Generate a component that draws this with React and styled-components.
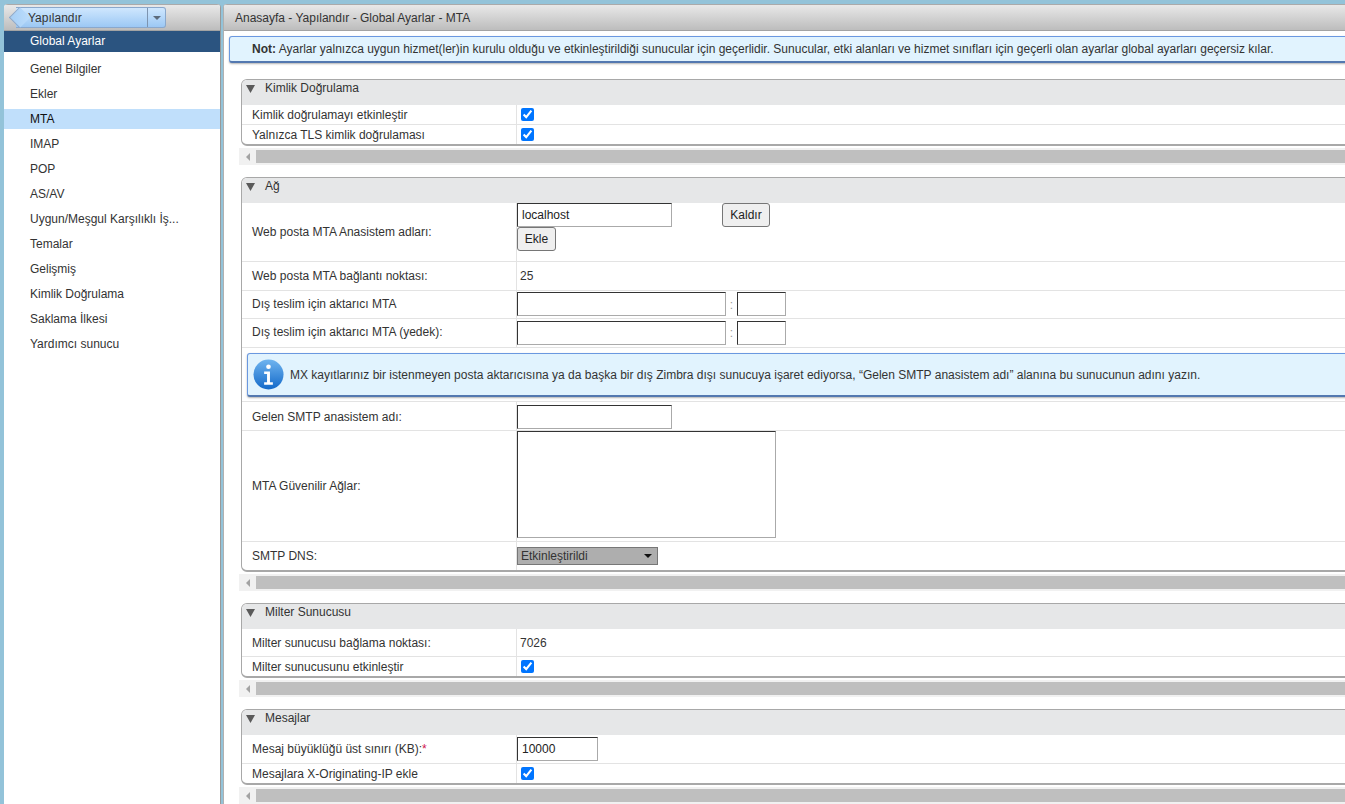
import styled, { createGlobalStyle } from 'styled-components';

const GlobalStyle = createGlobalStyle`
  html, body {
    margin: 0;
    height: 100%;
    overflow: hidden;
  }
  body {
    background: #93c3d9;
    font-family: "Liberation Sans", Arial, sans-serif;
    font-size: 12px;
    color: #333;
  }
`;

const menuItems = [
  'Genel Bilgiler',
  'Ekler',
  'MTA',
  'IMAP',
  'POP',
  'AS/AV',
  'Uygun/Meşgul Karşılıklı İş...',
  'Temalar',
  'Gelişmiş',
  'Kimlik Doğrulama',
  'Saklama İlkesi',
  'Yardımcı sunucu',
];

const TriangleDown = () => (
  <svg width="9" height="8" viewBox="0 0 9 8">
    <path d="M0 0h9L4.500 8z" fill="#5a5a5a" />
  </svg>
);

const Section = ({ title, mt, children }) => (
  <SectionWrap $mt={mt}>
    <Card>
      <CardHead>
        <TriangleDown />
        <span>{title}</span>
      </CardHead>
      {children}
    </Card>
    <ScrollBar>
      <ScrollArrow />
      <ScrollThumb />
    </ScrollBar>
  </SectionWrap>
);

// up / down: the label sits 1px off the row centre on some rows
const Field = ({ label, h, top, up, down, children }) => (
  <Row $h={h}>
    <Label $up={up} $down={down}>{label}</Label>
    <Value $top={top}>{children}</Value>
  </Row>
);

export default function App() {
  return (
    <Page>
      <GlobalStyle />
      <Sidebar>
        <PanelHead>
          <BackButton>
            <BackLabel>Yapılandır</BackLabel>
            <BackMenu />
          </BackButton>
        </PanelHead>
        <SelectedTitle>Global Ayarlar</SelectedTitle>
        <Menu>
          {menuItems.map((item) => (
            <MenuItem key={item} $active={item === 'MTA'}>{item}</MenuItem>
          ))}
        </Menu>
      </Sidebar>
      <Main>
        <PanelHead>
          <Crumbs>Anasayfa - Yapılandır - Global Ayarlar - MTA</Crumbs>
        </PanelHead>
        <Note>
          <b>Not:</b> Ayarlar yalnızca uygun hizmet(ler)in kurulu olduğu ve etkinleştirildiği sunucular için geçerlidir. Sunucular, etki alanları ve hizmet sınıfları için geçerli olan ayarlar global ayarları geçersiz kılar.
        </Note>

        <Section title="Kimlik Doğrulama" mt={16}>
          <Field label="Kimlik doğrulamayı etkinleştir" h={19}><Check type="checkbox" defaultChecked /></Field>
          <Field label="Yalnızca TLS kimlik doğrulaması" h={20}><Check type="checkbox" defaultChecked /></Field>
        </Section>

        <Section title="Ağ" mt={12}>
          <Field label="Web posta MTA Anasistem adları:" h={58} top>
            <HostLine>
              <TextInput $w={155} defaultValue="localhost" />
              <Button $w={48}>Kaldır</Button>
            </HostLine>
            <Button $w={39}>Ekle</Button>
          </Field>
          <Field label="Web posta MTA bağlantı noktası:" h={29}><Plain>25</Plain></Field>
          <Field label="Dış teslim için aktarıcı MTA" h={28} up>
            <TextInput $w={209} $mt={-1} />
            <Colon>:</Colon>
            <TextInput $w={49} $mt={-1} />
          </Field>
          <Field label="Dış teslim için aktarıcı MTA (yedek):" h={29} up>
            <TextInput $w={209} />
            <Colon>:</Colon>
            <TextInput $w={49} />
          </Field>
          <InfoWrap>
            <InfoBox>
              <svg width="31" height="31" viewBox="0 0 32 32">
                <defs>
                  <linearGradient id="infoFill" x1="0" y1="0" x2="0" y2="1">
                    <stop offset="0" stopColor="#6fb4ef" />
                    <stop offset="1" stopColor="#1369c9" />
                  </linearGradient>
                </defs>
                <circle cx="16" cy="16" r="15.5" fill="url(#infoFill)" />
                <circle cx="16" cy="8" r="2.4" fill="#fff" />
                <path d="M11.500 13h6v11h3v2.500h-9V24h3v-8.500h-3z" fill="#fff" />
              </svg>
              <span>MX kayıtlarınız bir istenmeyen posta aktarıcısına ya da başka bir dış Zimbra dışı sunucuya işaret ediyorsa, “Gelen SMTP anasistem adı” alanına bu sunucunun adını yazın.</span>
            </InfoBox>
          </InfoWrap>
          <Field label="Gelen SMTP anasistem adı:" h={29} down><TextInput $w={155} $mt={2} /></Field>
          <Field label="MTA Güvenilir Ağlar:" h={111} top><TextArea /></Field>
          <Field label="SMTP DNS:" h={29}>
            <Select>
              <span>Etkinleştirildi</span>
              <SelectArrow />
            </Select>
          </Field>
        </Section>

        <Section title="Milter Sunucusu" mt={12}>
          <Field label="Milter sunucusu bağlama noktası:" h={27}><Plain>7026</Plain></Field>
          <Field label="Milter sunucusunu etkinleştir" h={20}><Check type="checkbox" defaultChecked /></Field>
        </Section>

        <Section title="Mesajlar" mt={12}>
          <Field label={<>Mesaj büyüklüğü üst sınırı (KB):<Req>*</Req></>} h={28}>
            <TextInput $w={81} defaultValue="10000" />
          </Field>
          <Field label="Mesajlara X-Originating-IP ekle" h={20}><Check type="checkbox" defaultChecked /></Field>
        </Section>
      </Main>
    </Page>
  );
}

const Page = styled.div`
  display: flex;
  gap: 2px;
  height: 804px;
  padding: 4px 0 0 4px;
  box-sizing: border-box;
  overflow: hidden;
`;

const Sidebar = styled.aside`
  flex: 0 0 217px;
  box-sizing: border-box;
  background: #fff;
  border-right: 1px solid #999;
  border-radius: 4px 4px 0 0;
  overflow: hidden;
`;

const Main = styled.main`
  flex: 1;
  min-width: 0;
  background: #fff;
  border-left: 1px solid #b0b0b0;
  border-radius: 4px 0 0 0;
  overflow: hidden;
`;

const PanelHead = styled.header`
  height: 27px;
  box-sizing: border-box;
  background: linear-gradient(#e8e8e8, #bdbdbd);
  border-top: 1px solid #aaa;
  border-bottom: 1px solid #a3a3a3;
  display: flex;
  align-items: center;
`;

const BackButton = styled.div`
  position: relative;
  display: flex;
  align-items: center;
  width: 150px;
  height: 21px;
  margin-left: 12px;
  box-sizing: border-box;
  background: linear-gradient(#cfe7fe, #9cc8f4);
  border: 1px solid #8aa8cc;
  border-left: none;
  border-radius: 0 3px 3px 0;
  &::before {
    content: '';
    position: absolute;
    left: -4px;
    top: 2px;
    width: 15px;
    height: 15px;
    box-sizing: border-box;
    background: linear-gradient(45deg, #a6cff6, #bcdcfb);
    border-left: 1px solid #8aa8cc;
    border-bottom: 1px solid #8aa8cc;
    transform: rotate(45deg);
  }
`;

const BackLabel = styled.span`
  position: relative;
  flex: 1;
  padding-left: 12px;
`;

const BackMenu = styled.span`
  flex: 0 0 17px;
  height: 100%;
  border-left: 1px solid #7d94b0;
  display: flex;
  align-items: center;
  justify-content: center;
  &::after {
    content: '';
    border-left: 4px solid transparent;
    border-right: 4px solid transparent;
    border-top: 4px solid #5c6b7c;
  }
`;

const SelectedTitle = styled.div`
  height: 21px;
  background: #2b5480;
  color: #fff;
  padding: 3px 0 0 26px;
  box-sizing: border-box;
  line-height: 14px;
`;

const Menu = styled.nav`
  padding-top: 5px;
`;

const MenuItem = styled.div`
  height: 25px;
  padding-left: 26px;
  line-height: 25px;
  color: ${(p) => (p.$active ? '#111' : '#333')};
  background: ${(p) => (p.$active ? 'linear-gradient(transparent 2px, #c0dffb 2px, #c0dffb 22px, transparent 22px)' : 'none')};
`;

const Crumbs = styled.div`
  padding-left: 11px;
`;

const Note = styled.div`
  margin: 5px 0 0 5px;
  width: 1300px;
  height: 27px;
  box-sizing: border-box;
  padding-left: 22px;
  line-height: 24px;
  background: #e1f3fe;
  border: 1px solid #6a98e0;
  border-bottom: 2px solid #5378b0;
  border-radius: 3px;
  box-shadow: 0 1px 2px rgba(0, 0, 0, 0.3);
  white-space: nowrap;
  b {
    font-weight: bold;
  }
`;

const SectionWrap = styled.section`
  margin: ${(p) => p.$mt}px 0 0 17px;
  width: 1300px;
`;

const Card = styled.div`
  border: 1px solid #a8a8a8;
  border-width: 1px 1px 2px 1px;
  border-radius: 6px;
  overflow: hidden;
`;

const CardHead = styled.div`
  height: 25px;
  background: #e6e7e8;
  display: flex;
  align-items: flex-start;
  padding: 5px 0 0 4px;
  box-sizing: border-box;
  span {
    margin-left: 10px;
    margin-top: -4px;
  }
`;

const Row = styled.div`
  display: flex;
  align-items: stretch;
  height: ${(p) => p.$h}px;
  box-sizing: border-box;
  border-top: 1px solid #e3e3e3;
  &:nth-child(2) {
    border-top: none;
  }
`;

const Label = styled.div`
  flex: 0 0 274px;
  box-sizing: border-box;
  padding: ${(p) => (p.$down ? 2 : 0)}px 0 ${(p) => (p.$up ? 2 : 0)}px 10px;
  display: flex;
  align-items: center;
  white-space: pre;
`;

const Value = styled.div`
  flex: 1;
  border-left: 1px solid #e3e3e3;
  display: flex;
  flex-direction: ${(p) => (p.$top ? 'column' : 'row')};
  align-items: ${(p) => (p.$top ? 'flex-start' : 'center')};
`;

const HostLine = styled.div`
  display: flex;
  gap: 50px;
`;

const Plain = styled.span`
  padding-left: 3px;
`;

const Req = styled.span`
  color: #d0164e;
`;

const Check = styled.input`
  margin: 0 0 0 4px;
`;

const TextInput = styled.input`
  width: ${(p) => p.$w}px;
  height: 24px;
  margin-top: ${(p) => p.$mt || 0}px;
  box-sizing: border-box;
  padding: 0 4px;
  font: 12px "Liberation Sans", Arial, sans-serif;
  color: #222;
  background: #fff;
  border: 1px solid;
  border-color: #333 #aaa #aaa #333;
  border-radius: 0;
  outline: none;
`;

const TextArea = styled.textarea`
  display: block;
  width: 259px;
  height: 107px;
  box-sizing: border-box;
  margin: 0;
  resize: none;
  background: #fff;
  border: 1px solid;
  border-color: #333 #aaa #aaa #333;
  outline: none;
`;

const Button = styled.button`
  width: ${(p) => p.$w}px;
  height: 24px;
  padding: 0;
  box-sizing: border-box;
  font: 12px "Liberation Sans", Arial, sans-serif;
  color: #222;
  background: #efefef;
  border: 1px solid #767676;
  border-radius: 3px;
`;

const Colon = styled.span`
  width: 11px;
  text-align: center;
  color: #999;
`;

const Select = styled.div`
  width: 141px;
  height: 18px;
  box-sizing: border-box;
  display: flex;
  align-items: center;
  justify-content: space-between;
  padding: 0 5px 0 3px;
  background: #aeaeae;
  border: 1px solid #777;
  color: #333;
`;

const SelectArrow = styled.span`
  border-left: 4px solid transparent;
  border-right: 4px solid transparent;
  border-top: 4px solid #111;
`;

const InfoWrap = styled.div`
  border-top: 1px solid #e3e3e3;
  padding: 5px 0 4px 5px;
`;

const InfoBox = styled.div`
  height: 44px;
  box-sizing: border-box;
  display: flex;
  align-items: center;
  gap: 6px;
  padding-left: 5px;
  background: #e1f3fe;
  border: 1px solid #6a98e0;
  border-bottom: 2px solid #5378b0;
  border-radius: 3px;
  box-shadow: 0 1px 2px rgba(0, 0, 0, 0.3);
  white-space: nowrap;
`;

const ScrollBar = styled.div`
  display: flex;
  align-items: center;
  height: 17px;
  margin: 2px 0 0 -2px;
  background: #f1f1f1;
`;

const ScrollArrow = styled.span`
  flex: 0 0 17px;
  display: flex;
  justify-content: center;
  &::after {
    content: '';
    border-top: 4px solid transparent;
    border-bottom: 4px solid transparent;
    border-right: 4px solid #a3a3a3;
  }
`;

const ScrollThumb = styled.span`
  flex: 1;
  height: 13px;
  background: #bfbfbf;
`;
